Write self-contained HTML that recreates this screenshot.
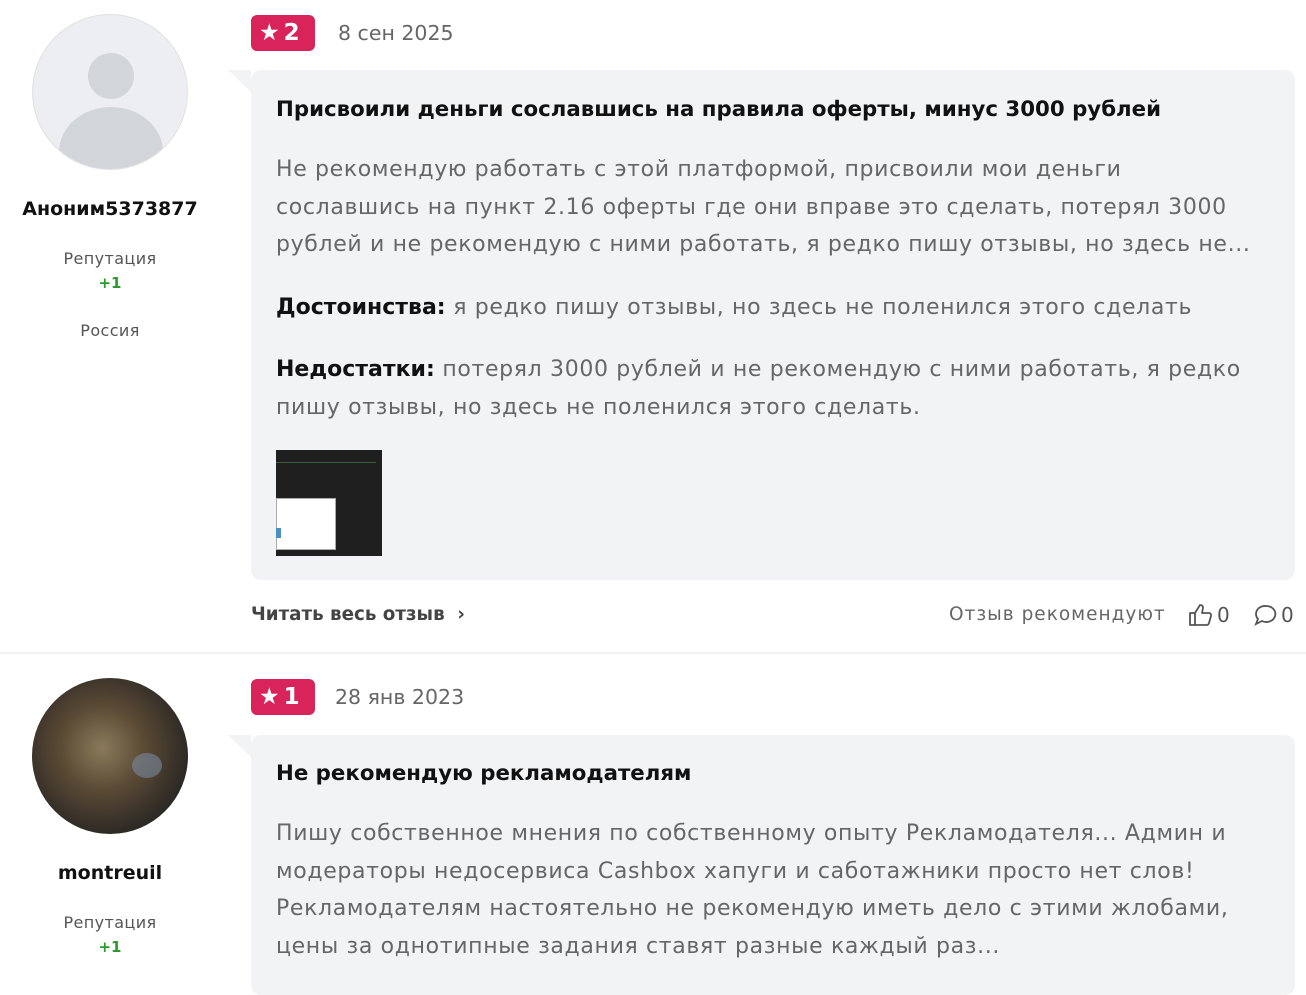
<!DOCTYPE html>
<html><head><meta charset="utf-8"><style>
*{margin:0;padding:0;box-sizing:border-box}
body{width:1306px;height:975px;background:#fff;font-family:"DejaVu Sans",sans-serif;position:relative;overflow:hidden;color:#111}
.abs{position:absolute}
.avatar{width:156px;height:156px;border-radius:50%;left:32px}
.name{width:220px;left:0;text-align:center;font-size:19px;font-weight:bold}
.rep{width:220px;left:0;text-align:center;font-size:16px;color:#555;letter-spacing:.4px}
.plus{width:220px;left:0;text-align:center;font-size:15px;color:#2a9d2a;font-weight:bold}
.badge{left:251px;width:64px;height:36px;background:#d8245a;border-radius:6px;color:#fff;font-weight:bold;font-size:23px;line-height:36px;padding-left:8px}
.badge span{margin-left:4px}
.date{font-size:20.5px;color:#666}
.bubble{left:251px;width:1044px;background:#f2f3f5;border-radius:10px}
.tail{width:0;height:0;border-top:22px solid #f2f3f5;border-left:23px solid transparent;left:228px}
.title{left:276px;font-size:21.3px;font-weight:bold;color:#111;white-space:nowrap}
.txt{left:276px;font-size:22px;line-height:37.5px;color:#666;white-space:nowrap;letter-spacing:.65px}
.txt b{color:#111;letter-spacing:0}
</style></head><body>
<div class="abs avatar" style="top:14px;background:#eceef1;border:1px solid #dfe1e5;overflow:hidden">
<div class="abs" style="left:55px;top:38px;width:46px;height:46px;border-radius:50%;background:#d2d5da"></div>
<div class="abs" style="left:26px;top:92px;width:104px;height:90px;border-radius:50%;background:#d2d5da"></div>
</div>
<div class="abs name" style="top:198px">Аноним5373877</div>
<div class="abs rep" style="top:249px">Репутация</div>
<div class="abs plus" style="top:274px">+1</div>
<div class="abs rep" style="top:321px">Россия</div>

<div class="abs badge" style="top:15px">★<span>2</span></div>
<div class="abs date" style="left:338px;top:21px">8 сен 2025</div>
<div class="abs tail" style="top:70px"></div>
<div class="abs bubble" style="top:70px;height:510px"></div>
<div class="abs title" style="top:97px">Присвоили деньги сославшись на правила оферты, минус 3000 рублей</div>
<div class="abs txt" style="top:151px">Не рекомендую работать с этой платформой, присвоили мои деньги<br>сославшись на пункт 2.16 оферты где они вправе это сделать, потерял 3000<br>рублей и не рекомендую с ними работать, я редко пишу отзывы, но здесь не...</div>
<div class="abs txt" style="top:289px"><b>Достоинства:</b> я редко пишу отзывы, но здесь не поленился этого сделать</div>
<div class="abs txt" style="top:351px"><b>Недостатки:</b> потерял 3000 рублей и не рекомендую с ними работать, я редко<br>пишу отзывы, но здесь не поленился этого сделать.</div>
<div class="abs" style="left:276px;top:450px;width:106px;height:106px;background:#1f1f1f">
<div class="abs" style="left:0;top:48px;width:60px;height:52px;background:#fff;border:1px solid #aaa"></div>
<div class="abs" style="left:0;top:78px;width:5px;height:10px;background:#4a90c0"></div>
<div class="abs" style="left:0;top:12px;width:100px;height:1px;background:#3a5a3a"></div>
</div>
<div class="abs" style="left:251px;top:604px;font-size:18.3px;color:#444;font-weight:bold">Читать весь отзыв &nbsp;›</div>
<div class="abs" style="left:949px;top:604px;font-size:18.5px;color:#666;letter-spacing:1px">Отзыв рекомендуют</div>
<svg class="abs" style="left:1188px;top:603px" width="26" height="24" viewBox="0 0 26 24" fill="none" stroke="#555" stroke-width="1.8" stroke-linejoin="round"><path d="M2 10h5v12H2zM7 10l5-8c2 0 3 1 3 3l-1 5h7c1.5 0 2.5 1.3 2 3l-2 7c-.4 1.3-1.3 2-2.5 2H7"/></svg>
<div class="abs" style="left:1217px;top:603px;font-size:20px;color:#555">0</div>
<svg class="abs" style="left:1254px;top:604px" width="24" height="22" viewBox="0 0 24 22" fill="none" stroke="#555" stroke-width="1.8"><path d="M12 2a9 8 0 1 1-4 15l-6 3 2-5A9 8 0 0 1 12 2z"/></svg>
<div class="abs" style="left:1281px;top:603px;font-size:20px;color:#555">0</div>
<div class="abs" style="left:0;top:652px;width:1306px;height:2px;background:#f0f1f3"></div>

<div class="abs avatar" style="top:678px;background:radial-gradient(circle at 45% 45%,#8a7a5a 0%,#5a4a35 35%,#2e2a25 70%,#1e1c1a 100%)">
<div class="abs" style="left:100px;top:75px;width:30px;height:25px;border-radius:50%;background:#7a8aa0;opacity:.6"></div>
</div>
<div class="abs name" style="top:862px">montreuil</div>
<div class="abs rep" style="top:913px">Репутация</div>
<div class="abs plus" style="top:938px">+1</div>

<div class="abs badge" style="top:679px">★<span>1</span></div>
<div class="abs date" style="left:335px;top:685px">28 янв 2023</div>
<div class="abs tail" style="top:735px"></div>
<div class="abs bubble" style="top:735px;height:260px"></div>
<div class="abs title" style="top:761px">Не рекомендую рекламодателям</div>
<div class="abs txt" style="top:815px">Пишу собственное мнения по собственному опыту Рекламодателя... Админ и<br>модераторы недосервиса Cashbox хапуги и саботажники просто нет слов!<br>Рекламодателям настоятельно не рекомендую иметь дело с этими жлобами,<br>цены за однотипные задания ставят разные каждый раз...</div>
</body></html>
